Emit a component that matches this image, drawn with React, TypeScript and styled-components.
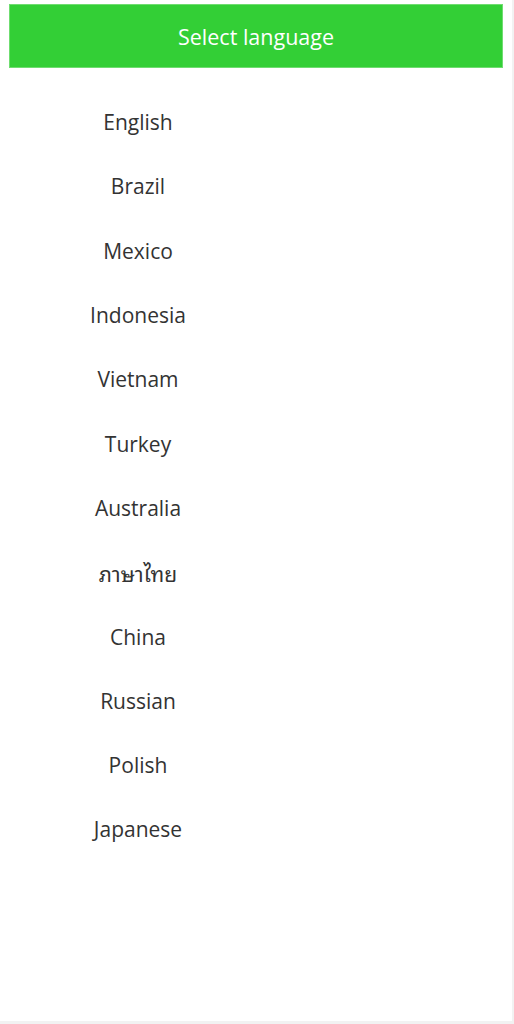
import React from "react";
import styled, { createGlobalStyle } from "styled-components";

const GlobalStyle = createGlobalStyle`
  html, body {
    margin: 0;
    padding: 0;
    background: #f2f2f2;
  }
  body {
    font-family: "Open Sans", "Noto Sans", "Noto Sans Thai Looped", "Noto Sans Thai", sans-serif;
  }
`;

const Page = styled.div`
  width: 512px;
  height: 1021px;
  background: #ffffff;
  padding-top: 4px;
  box-sizing: border-box;
`;

const Header = styled.div`
  margin: 0 9px;
  height: 64px;
  background: #33cf36;
  border: 1px solid #6fdd70;
  box-sizing: border-box;
  display: flex;
  align-items: center;
  justify-content: center;
  color: #ffffff;
  font-size: 21.5px;
`;

const List = styled.ul`
  list-style: none;
  margin: 0;
  padding: 22px 0 0 9px;
  width: 258px;
`;

const Item = styled.li`
  height: 64.3px;
  display: flex;
  align-items: center;
  justify-content: center;
  font-size: 21px;
  color: #333333;
`;

const languages = [
  "English",
  "Brazil",
  "Mexico",
  "Indonesia",
  "Vietnam",
  "Turkey",
  "Australia",
  "ภาษาไทย",
  "China",
  "Russian",
  "Polish",
  "Japanese",
];

export default function App() {
  return (
    <>
      <GlobalStyle />
      <Page>
        <Header>Select language</Header>
        <List>
          {languages.map((l) => (
            <Item key={l}>{l}</Item>
          ))}
        </List>
      </Page>
    </>
  );
}
